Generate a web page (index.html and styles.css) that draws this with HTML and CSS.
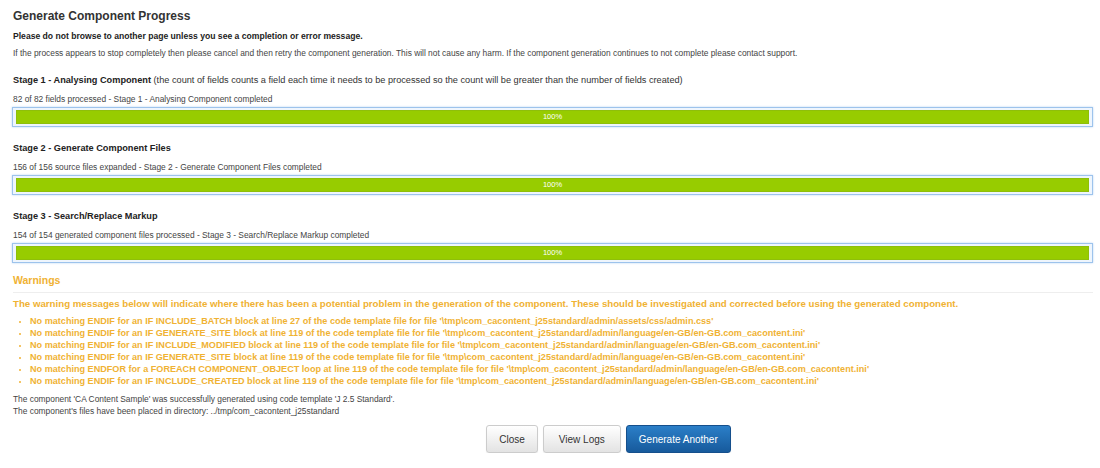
FILE: index.html
```html
<!DOCTYPE html>
<html>
<head>
<meta charset="utf-8">
<link rel="stylesheet" href="styles.css">
</head>
<body>
<div class="page">
  <h1 class="title">Generate Component Progress</h1>
  <p class="lead">Please do not browse to another page unless you see a completion or error message.</p>
  <p class="small intro">If the process appears to stop completely then please cancel and then retry the component generation. This will not cause any harm. If the component generation continues to not complete please contact support.</p>

  <div class="stage">
    <h2 class="stage-title">Stage 1 - Analysing Component <span class="note">(the count of fields counts a field each time it needs to be processed so the count will be greater than the number of fields created)</span></h2>
    <p class="small status">82 of 82 fields processed - Stage 1 - Analysing Component completed</p>
    <div class="bar"><div class="fill" style="width:100%">100%</div></div>
  </div>

  <div class="stage">
    <h2 class="stage-title">Stage 2 - Generate Component Files</h2>
    <p class="small status">156 of 156 source files expanded - Stage 2 - Generate Component Files completed</p>
    <div class="bar"><div class="fill" style="width:100%">100%</div></div>
  </div>

  <div class="stage">
    <h2 class="stage-title">Stage 3 - Search/Replace Markup</h2>
    <p class="small status">154 of 154 generated component files processed - Stage 3 - Search/Replace Markup completed</p>
    <div class="bar"><div class="fill" style="width:100%">100%</div></div>
  </div>

  <div class="warnings">
    <h3 class="warn-title">Warnings</h3>
    <p class="warn-lead">The warning messages below will indicate where there has been a potential problem in the generation of the component. These should be investigated and corrected before using the generated component.</p>
    <ul class="warn-list">
      <li>No matching ENDIF for an IF INCLUDE_BATCH block at line 27 of the code template file for file '\tmp\com_cacontent_j25standard/admin/assets/css/admin.css'</li>
      <li>No matching ENDIF for an IF GENERATE_SITE block at line 119 of the code template file for file '\tmp\com_cacontent_j25standard/admin/language/en-GB/en-GB.com_cacontent.ini'</li>
      <li>No matching ENDIF for an IF INCLUDE_MODIFIED block at line 119 of the code template file for file '\tmp\com_cacontent_j25standard/admin/language/en-GB/en-GB.com_cacontent.ini'</li>
      <li>No matching ENDIF for an IF GENERATE_SITE block at line 119 of the code template file for file '\tmp\com_cacontent_j25standard/admin/language/en-GB/en-GB.com_cacontent.ini'</li>
      <li>No matching ENDFOR for a FOREACH COMPONENT_OBJECT loop at line 119 of the code template file for file '\tmp\com_cacontent_j25standard/admin/language/en-GB/en-GB.com_cacontent.ini'</li>
      <li>No matching ENDIF for an IF INCLUDE_CREATED block at line 119 of the code template file for file '\tmp\com_cacontent_j25standard/admin/language/en-GB/en-GB.com_cacontent.ini'</li>
    </ul>
  </div>

  <p class="small result">The component 'CA Content Sample' was successfully generated using code template 'J 2.5 Standard'.<br>The component's files have been placed in directory: ../tmp/com_cacontent_j25standard</p>

  <div class="actions">
    <button class="btn btn-close">Close</button>
    <button class="btn btn-logs">View Logs</button>
    <button class="btn btn-primary">Generate Another</button>
  </div>
</div>
</body>
</html>
```

FILE: styles.css
```css
html, body {
  margin: 0;
  padding: 0;
  background: #ffffff;
}
body {
  font-family: "Liberation Sans", Arial, sans-serif;
  color: #333333;
}
.page {
  padding: 8px 7px 0 13px;
}
.title {
  font-size: 12px;
  font-weight: bold;
  margin: 0;
  line-height: 16px;
  color: #333;
}
.lead {
  font-size: 8.6px;
  font-weight: bold;
  margin: 5px 0 0;
  line-height: 14px;
  color: #222;
}
.small {
  font-size: 8.4px;
  margin: 0;
  line-height: 12px;
  color: #444;
}
.intro {
  margin-top: 4px;
}
.stage {
  margin-top: 14px;
}
.stage-title {
  font-size: 9.2px;
  font-weight: bold;
  margin: 0;
  line-height: 14px;
  color: #222;
}
.note {
  font-weight: normal;
  color: #333;
}
.status {
  margin-top: 6px;
}
.bar {
  margin: 2px 0 0 -1px;
  height: 14px;
  border: 1px solid #9dc3ec;
  box-shadow: 0 0 2px #b9d5f3;
  padding: 2px 3px;
  background: #eef5fd;
  display: flex;
}
.fill {
  background: #97cc00;
  border: 1px solid #8ebf0a;
  color: #ffffff;
  font-size: 7.5px;
  line-height: 12px;
  text-align: center;
  box-sizing: border-box;
}
.warnings {
  margin-top: 10px;
  color: #f0b233;
}
.warn-title {
  font-size: 10.5px;
  font-weight: bold;
  margin: 0;
  line-height: 14px;
  padding-bottom: 5px;
  border-bottom: 1px solid #eeeeee;
}
.warn-lead {
  font-size: 9.7px;
  font-weight: bold;
  margin: 5px 0 0;
  line-height: 12px;
}
.warn-list {
  margin: 5px 0 0;
  padding-left: 17px;
  font-size: 9.1px;
  font-weight: bold;
  line-height: 12px;
}
.warn-list li::marker {
  font-size: 8px;
}
.result {
  margin-top: 6px;
}
.actions {
  display: flex;
  justify-content: center;
  gap: 5px;
  margin-top: 8px;
  padding-left: 111px;
}
.btn {
  font-family: "Liberation Sans", Arial, sans-serif;
  font-size: 10px;
  height: 28px;
  padding: 0 13px;
  border-radius: 3px;
  border: 1px solid #cccccc;
  background: linear-gradient(#ffffff, #e3e3e3);
  color: #333;
  box-shadow: 0 1px 1px rgba(0,0,0,0.08);
}
.btn-close {
  padding: 0 12px;
}
.btn-logs {
  padding: 0 15px;
}
.btn-primary {
  padding: 0 12px;
  background: linear-gradient(#2b7fc8, #175a9c);
  border-color: #154f8c;
  color: #ffffff;
}
```
